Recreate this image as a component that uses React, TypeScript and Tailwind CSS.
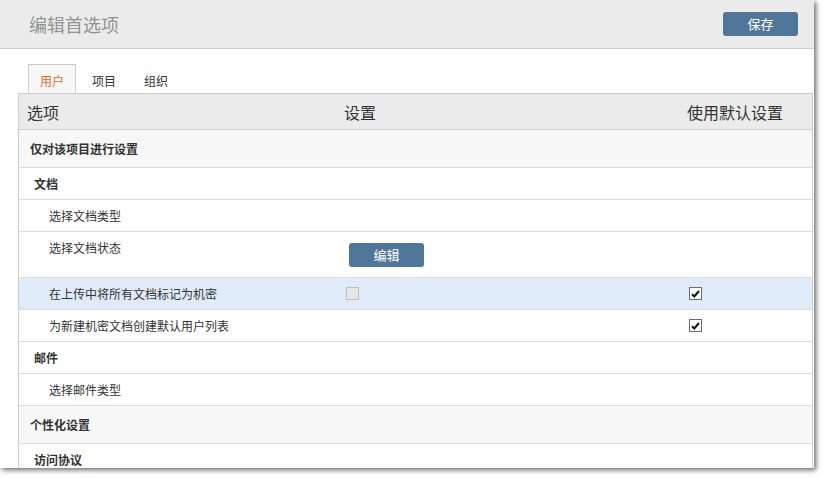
import React from "react";

type Row = {
  label: string;
  level: 0 | 1 | 2;
  h: string;
  bg?: string;
  setting?: "button" | "disabled";
  useDefault?: boolean;
  top?: boolean;
};

const rows: Row[] = [
  { label: "仅对该项目进行设置", level: 0, h: "h-[38px]", bg: "bg-[#f7f7f7]" },
  { label: "文档", level: 1, h: "h-[32px]" },
  { label: "选择文档类型", level: 2, h: "h-[32px]" },
  { label: "选择文档状态", level: 2, h: "h-[46px]", setting: "button", top: true },
  { label: "在上传中将所有文档标记为机密", level: 2, h: "h-[32px]", bg: "bg-[#dfebf8]", setting: "disabled", useDefault: true },
  { label: "为新建机密文档创建默认用户列表", level: 2, h: "h-[32px]", useDefault: true },
  { label: "邮件", level: 1, h: "h-[32px]" },
  { label: "选择邮件类型", level: 2, h: "h-[32px]" },
  { label: "个性化设置", level: 0, h: "h-[38px]", bg: "bg-[#f7f7f7]" },
  { label: "访问协议", level: 1, h: "h-[32px]" },
];

function CheckedBox() {
  return (
    <span className="flex h-[13px] w-[13px] items-center justify-center border border-[#6b6b6b] bg-white">
      <svg width="9" height="8" viewBox="0 0 9 8">
        <path d="M1 4.2 L3.3 6.5 L8 1" fill="none" stroke="#111" strokeWidth="2" />
      </svg>
    </span>
  );
}

function TableRow({ row }: { row: Row }) {
  const pad = row.level === 0 ? "pl-[11px]" : row.level === 1 ? "pl-[15px]" : "pl-[30px]";
  const weight = row.level === 2 ? "font-normal" : "font-bold";
  return (
    <div
      className={`grid grid-cols-[316px_343px_1fr] border-b border-[#dcdcdc] ${row.h} ${row.bg ?? "bg-white"} ${
        row.top ? "items-start pt-[9px]" : "items-center"
      }`}
    >
      <div className={`${pad} ${weight} text-[12px] leading-[14px] text-[#333]`}>{row.label}</div>
      <div className="pl-[11px]">
        {row.setting === "button" && (
          <button className="ml-[3px] mt-[2px] h-[24px] w-[75px] rounded-[3px] bg-[#50769a] text-[13px] text-white">
            编辑
          </button>
        )}
        {row.setting === "disabled" && (
          <span className="block h-[13px] w-[13px] border border-[#bdbdbd] bg-[#e6e6e6]" />
        )}
      </div>
      <div className="pl-[11px]">{row.useDefault && <CheckedBox />}</div>
    </div>
  );
}

export default function App() {
  return (
    <div className="h-[478px] w-[825px] bg-white font-['Noto_Sans_CJK_SC',sans-serif]">
      <div className="h-[468px] w-[814px] overflow-hidden bg-white shadow-[2px_2px_5px_rgba(0,0,0,0.6)]">
        <div className="flex h-[49px] items-center justify-between border-b border-[#cccccc] bg-[#ebebeb] pl-[29px] pr-[16px]">
          <h1 className="text-[18px] font-normal text-[#929292]">编辑首选项</h1>
          <button className="h-[24px] w-[75px] rounded-[3px] bg-[#50769a] text-[13px] text-white">保存</button>
        </div>

        <div className="pl-[18px] pr-[1px] pt-[16px]">
          <div className="flex h-[28px] items-end pl-[10px] text-[12px]">
            <div className="flex h-[29px] w-[48px] items-center justify-center border border-b-0 border-[#cccccc] bg-[#f7f7f7] pt-[3px] text-[#e0681c]">
              用户
            </div>
            <div className="flex h-[28px] w-[56px] items-center justify-center pt-[3px] text-[#333]">项目</div>
            <div className="flex h-[28px] w-[48px] items-center justify-center pt-[3px] text-[#333]">组织</div>
          </div>

          <div className="border-x border-t border-[#cccccc]">
            <div className="grid h-[36px] grid-cols-[316px_343px_1fr] items-center border-b border-[#cccccc] bg-[#ebebeb] text-[16px] text-[#333]">
              <div className="pl-[8px]">选项</div>
              <div className="pl-[9px]">设置</div>
              <div className="pl-[9px]">使用默认设置</div>
            </div>
            {rows.map((r) => (
              <TableRow key={r.label} row={r} />
            ))}
          </div>
        </div>
      </div>
    </div>
  );
}
